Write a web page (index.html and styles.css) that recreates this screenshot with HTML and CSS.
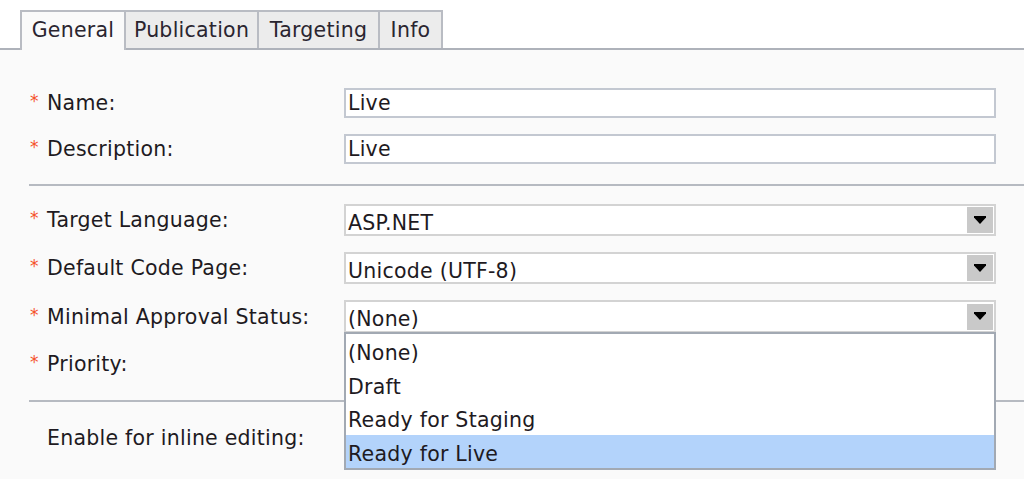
FILE: index.html
```html
<!DOCTYPE html>
<html>
<head>
<meta charset="utf-8">
<link rel="stylesheet" href="styles.css">
</head>
<body>
<div class="tabs">
  <div class="tab active t1">General</div>
  <div class="tab t2">Publication</div>
  <div class="tab t3">Targeting</div>
  <div class="tab t4">Info</div>
</div>
<div class="panel">
  <div class="section first">
    <div class="row">
      <div class="lbl"><span class="req">*</span>Name:</div>
      <div class="input">Live</div>
    </div>
    <div class="row">
      <div class="lbl"><span class="req">*</span>Description:</div>
      <div class="input">Live</div>
    </div>
  </div>
  <div class="section">
    <div class="row srow">
      <div class="lbl"><span class="req">*</span>Target Language:</div>
      <div class="select"><span class="val">ASP.NET</span><span class="btn"><svg width="12" height="8" viewBox="0 0 12 8"><path d="M0 0H12V1.5L6 8L0 1.5Z" fill="#000"/></svg></span></div>
    </div>
    <div class="row srow">
      <div class="lbl"><span class="req">*</span>Default Code Page:</div>
      <div class="select"><span class="val">Unicode (UTF-8)</span><span class="btn"><svg width="12" height="8" viewBox="0 0 12 8"><path d="M0 0H12V1.5L6 8L0 1.5Z" fill="#000"/></svg></span></div>
    </div>
    <div class="row srow">
      <div class="lbl"><span class="req">*</span>Minimal Approval Status:</div>
      <div class="select open"><span class="val">(None)</span><span class="btn"><svg width="12" height="8" viewBox="0 0 12 8"><path d="M0 0H12V1.5L6 8L0 1.5Z" fill="#000"/></svg></span>
        <div class="list">
          <div class="opt">(None)</div>
          <div class="opt">Draft</div>
          <div class="opt">Ready for Staging</div>
          <div class="opt sel">Ready for Live</div>
        </div>
      </div>
    </div>
    <div class="row srow">
      <div class="lbl"><span class="req">*</span>Priority:</div>
      <div class="select"></div>
    </div>
  </div>
  <div class="section last">
    <div class="row srow">
      <div class="lbl"><span class="req"></span>Enable for inline editing:</div>
      <div class="field"></div>
    </div>
  </div>
</div>
</body>
</html>
```
FILE: styles.css
```css
* { box-sizing: border-box; }
html, body {
  margin: 0;
  padding: 0;
  background: #ffffff;
  font-family: "DejaVu Sans", Verdana, sans-serif;
  font-size: 20.5px;
  letter-spacing: 0.25px;
  color: #1e1a22;
  overflow: hidden;
}
.tabs {
  display: flex;
  align-items: flex-end;
  padding: 10px 0 0 20px;
  height: 48px;
}
.tab {
  height: 38px;
  line-height: 36px;
  padding: 0;
  border: 2px solid #b9bcc3;
  border-bottom: none;
  margin-right: -2px;
  background: #ececec;
  color: #2a2530;
  text-align: center;
  white-space: nowrap;
}
.t1 { width: 106px; }
.t2 { width: 135px; }
.t3 { width: 123px; }
.t4 { width: 65px; }
.tab.active {
  background: #fafafa;
  height: 40px;
  margin-bottom: -2px;
  position: relative;
  z-index: 1;
}
.panel {
  border-top: 2px solid #aeb2ba;
  background: #fafafa;
  height: 431px;
}
.section {
  margin-left: 29px;
  padding: 18px 28px 20px 0;
  border-top: 2px solid #b6bac1;
  display: flex;
  flex-direction: column;
  gap: 16px;
}
.section.first {
  border-top: none;
  padding-top: 38px;
}
.section.last {
  padding-top: 20px;
}
.row {
  display: grid;
  grid-template-columns: 315px 1fr;
  align-items: center;
  height: 30px;
}
.srow { height: 32px; }
.lbl {
  display: flex;
  align-items: center;
  white-space: nowrap;
}
.req {
  width: 18px;
  padding-left: 1px;
  color: #f5512a;
  font-size: 17px;
  line-height: 17px;
  align-self: flex-start;
  margin-top: 2px;
}
.input {
  height: 30px;
  border: 2px solid #c3c8d1;
  background: #ffffff;
  padding: 0 0 0 2px;
  line-height: 26px;
}
.select {
  position: relative;
  height: 32px;
  border: 2px solid #d3d3d3;
  background: #ffffff;
  display: flex;
  align-items: center;
  justify-content: space-between;
  padding: 5px 1px 0 2px;
}
.select.open { height: 33px; }
.btn {
  width: 26px;
  height: 26px;
  background: #c9c9c9;
  display: flex;
  align-items: center;
  justify-content: center;
  margin-top: -5px;
}
.btn svg { display: block; margin-top: -1px; }
.list {
  position: absolute;
  left: -2px;
  right: -2px;
  top: 30px;
  height: 138px;
  border: 2px solid #a2a9b3;
  background: #ffffff;
  z-index: 5;
  display: flex;
  flex-direction: column;
}
.opt {
  height: 33.5px;
  line-height: 33.5px;
  padding: 3px 0 0 2px;
}
.opt.sel { background: #b3d3fb; }
.field { height: 32px; }
```
